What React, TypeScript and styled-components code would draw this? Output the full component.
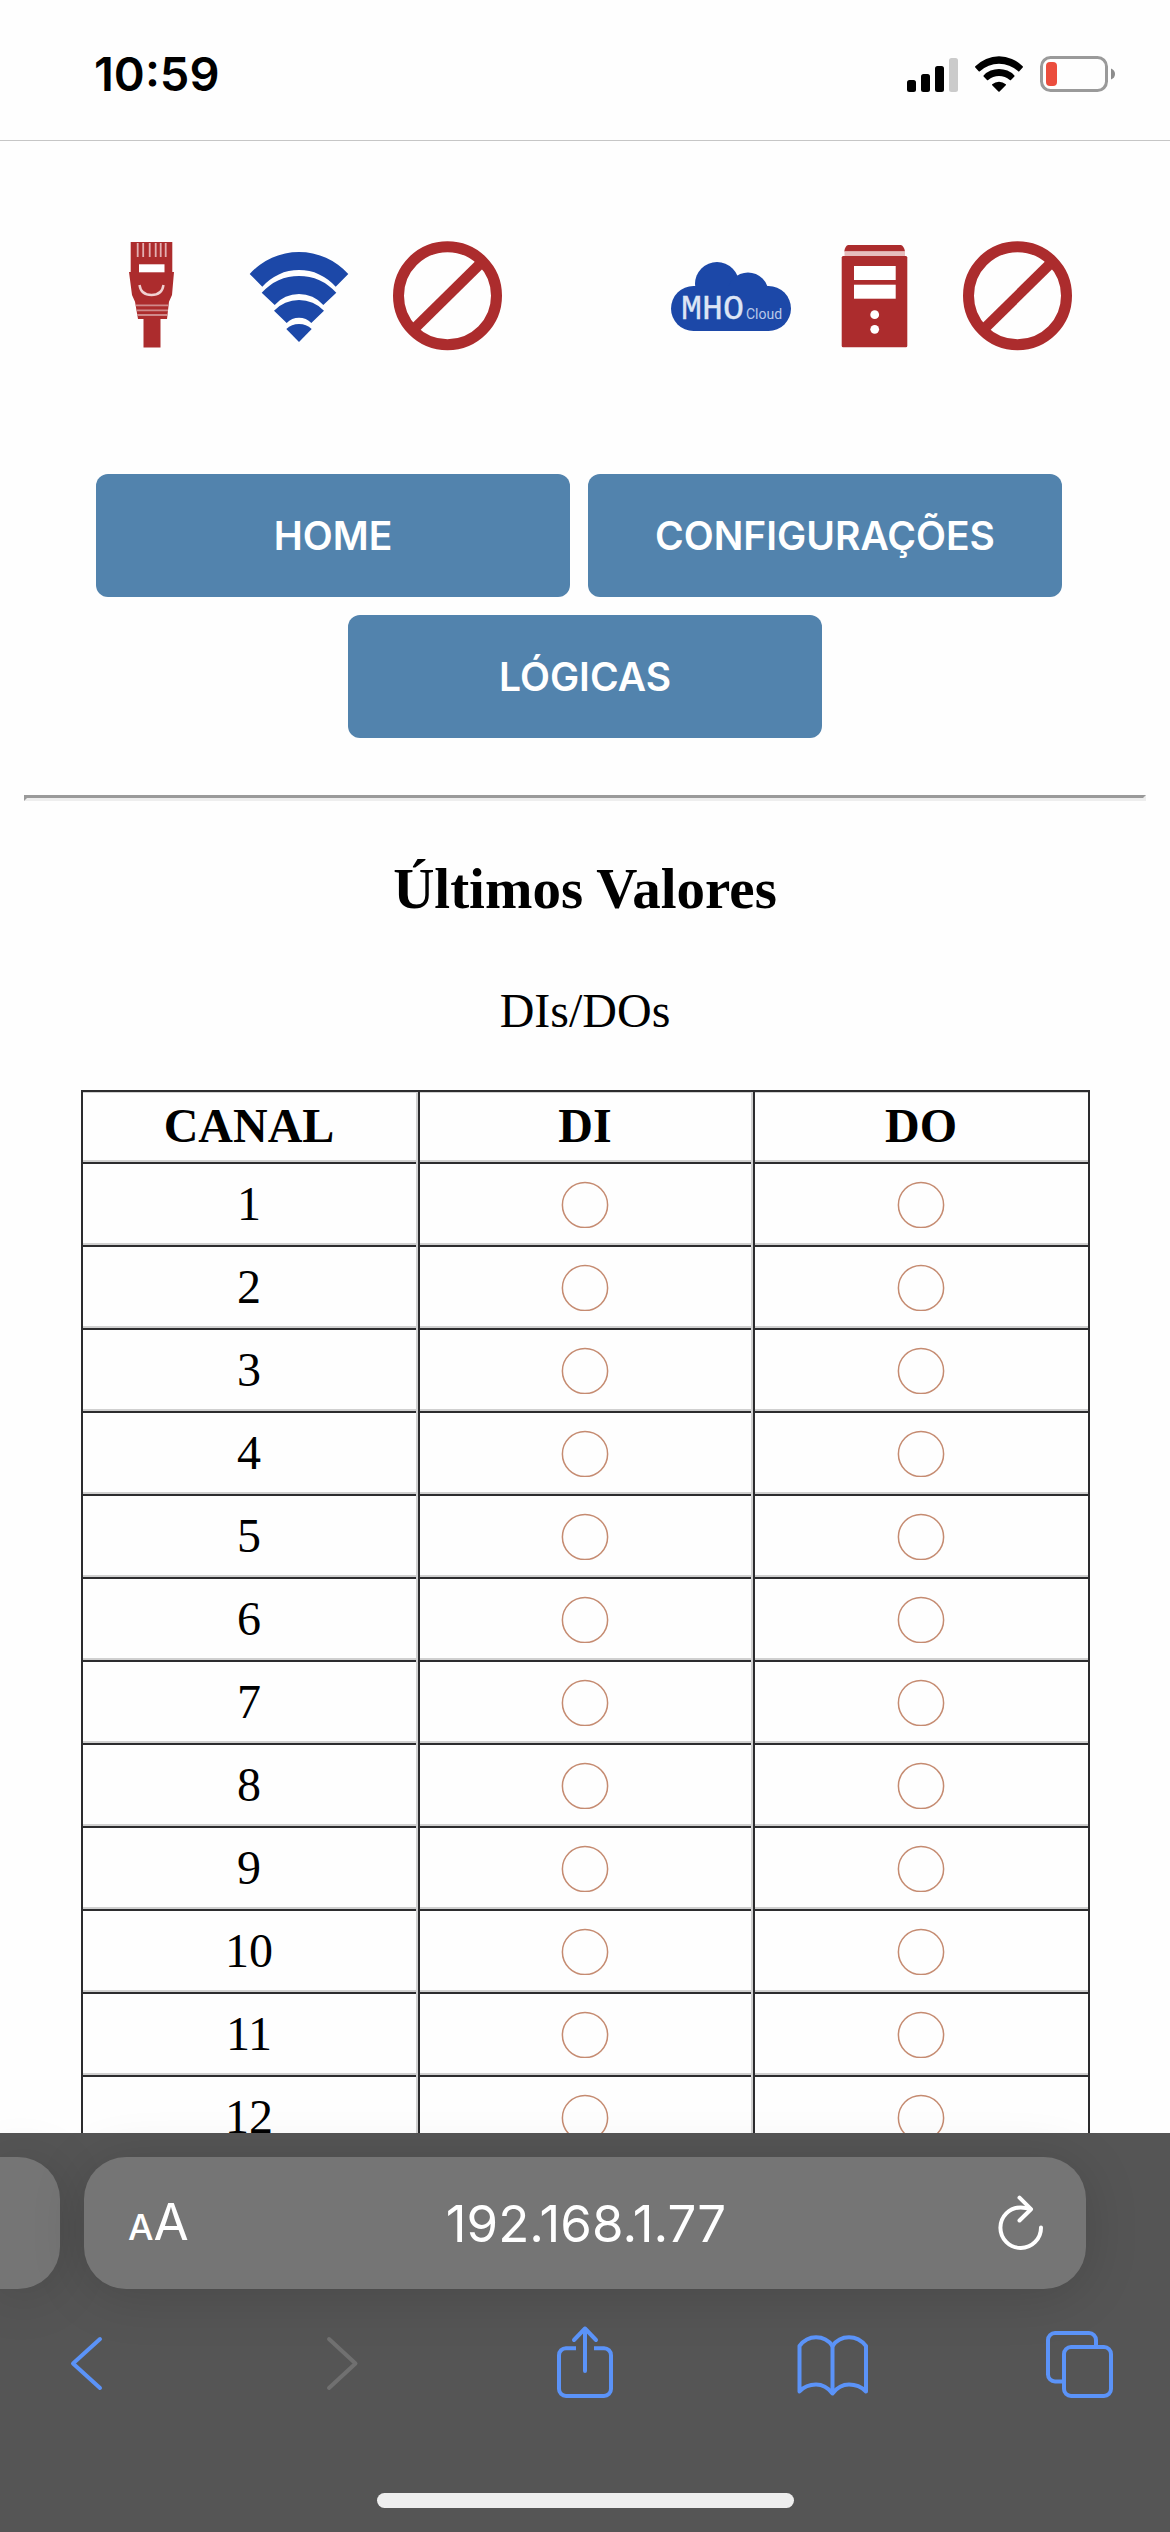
import React from "react";
import styled, { createGlobalStyle } from "styled-components";

const RED = "#ac2c2d";
const BLUE = "#1c48a8";
const LINK = "#5b93f8";
const DARK = "#2c2c2e";
const LIGHT = "#d0d0d0";
const UI_FONT = `Inter, "Liberation Sans", sans-serif`;

const GlobalStyle = createGlobalStyle`
  body {
    margin: 0;
    background: #fefefe;
    color: #000;
    font-family: "Liberation Serif", serif;
  }
`;

const Screen = styled.div`
  display: flex;
  flex-direction: column;
  height: 100vh;
  overflow: hidden;
`;

const StatusBar = styled.header`
  box-sizing: border-box;
  display: flex;
  flex: none;
  align-items: center;
  justify-content: space-between;
  height: 141px;
  padding: 8px 55px 0 94px;
  border-bottom: 1px solid #c6c6c6;
  font-family: ${UI_FONT};
`;

const Clock = styled.time`
  font-size: 47px;
  line-height: 56px;
  font-weight: 600;
`;

const StatusIcons = styled.div`
  display: flex;
  align-items: flex-end;
  gap: 17px;

  svg {
    display: block;
  }
`;

const Page = styled.main`
  flex: 1;
  min-height: 0;
  overflow: hidden;
  padding: 95px 24px 0;
`;

const Indicators = styled.section`
  display: flex;
  justify-content: space-between;
  padding: 0 69px 0 67px;
`;

const IndicatorGroup = styled.div<{ $gap: number }>`
  display: flex;
  gap: ${(p) => p.$gap}px;

  svg {
    display: block;
  }
`;

const Nav = styled.nav`
  display: flex;
  flex-direction: column;
  gap: 18px;
  margin-top: 118px;
`;

const NavRow = styled.div<{ $trailing?: number }>`
  display: flex;
  justify-content: center;
  gap: 18px;
  padding-right: ${(p) => p.$trailing ?? 0}px;
`;

const NavButton = styled.button`
  width: 474px;
  height: 123px;
  padding: 0;
  border: 0;
  border-radius: 12px;
  background: #5283ad;
  color: #fff;
  font-family: ${UI_FONT};
  font-size: 39px;
  font-weight: 600;
`;

const Divider = styled.hr`
  height: 0;
  margin: 57px 0 0;
  border: 3px solid;
  border-color: #9a9a9a #eee #eee #9a9a9a;
`;

const Title = styled.h3`
  margin: 56px 0 0;
  font-size: 57px;
  line-height: 64px;
  text-align: center;
`;

const Values = styled.table`
  width: calc(100% - 113px);
  margin: 0 auto;
  table-layout: fixed;
  border: 2px solid ${DARK};
  border-spacing: 0;
  font-size: 48px;
  line-height: 56px;
  text-align: center;

  caption {
    padding: 62px 0 51px;
  }

  th,
  td {
    box-sizing: border-box;
    padding: 0;
    border: 0 solid ${DARK};
    box-shadow: inset 0 2px 0 ${DARK}, inset 0 -2px 0 ${LIGHT};
  }

  td {
    height: 83px;
  }

  thead th {
    height: 70px;
    padding-bottom: 2px;
    box-shadow: inset 0 1px 0 ${LIGHT}, inset 0 -2px 0 ${LIGHT};
  }

  tbody th {
    font-weight: 400;
  }

  tr > * + * {
    border-left-width: 2px;
  }

  tr > :not(:last-child) {
    border-right: 2px solid ${LIGHT};
  }
`;

const LampIcon = styled.svg`
  display: block;
  width: 48px;
  height: 48px;
  margin: 0 auto;
  fill: none;
  stroke: #c58b71;
  stroke-width: 1.5;
`;

const BrowserBar = styled.footer`
  position: relative;
  flex: none;
  padding: 24px 0;
  background: #555;
  font-family: ${UI_FONT};
`;

const TabStrip = styled.div`
  display: flex;
  gap: 24px;
  padding-right: 84px;
`;

const PreviousTab = styled.div`
  flex: none;
  width: 60px;
  height: 132px;
  border-radius: 0 42px 42px 0;
  background: #757575;
  box-shadow: 0 6px 54px rgba(0, 0, 0, 0.15);
`;

const AddressField = styled.div`
  box-sizing: border-box;
  display: flex;
  flex: 1;
  align-items: center;
  min-width: 0;
  height: 132px;
  padding: 2px 42px 0 44px;
  border-radius: 42px;
  background: #757575;
  box-shadow: 0 6px 54px rgba(0, 0, 0, 0.15);
`;

const FieldButton = styled.button<{ $end?: boolean }>`
  display: flex;
  flex: none;
  align-items: baseline;
  justify-content: ${(p) => (p.$end ? "flex-end" : "flex-start")};
  width: 64px;
  padding: 0;
  border: 0;
  background: none;
  color: #fff;
  font-family: inherit;
  font-size: 51px;
  line-height: 60px;

  small {
    font-size: 36px;
    font-weight: 500;
  }
`;

const Address = styled.input`
  flex: 1;
  min-width: 0;
  padding: 0;
  border: 0;
  background: none;
  color: #fff;
  font-family: inherit;
  font-size: 51px;
  line-height: 60px;
  text-align: center;
`;

const Toolbar = styled.div`
  display: flex;
  justify-content: space-between;
  margin-top: 33px;
  padding: 0 50px 0 46px;
`;

const ToolButton = styled.button`
  width: 80px;
  height: 80px;
  padding: 0;
  border: 0;
  background: none;
  color: ${LINK};

  &:disabled {
    color: #707070;
  }

  svg {
    display: block;
  }
`;

const HomeIndicator = styled.div`
  width: 417px;
  height: 15px;
  margin: 91px auto 0;
  border-radius: 8px;
  background: #eee;
`;

const SignalIcon = () => (
  <svg width="51" height="34" viewBox="0 0 51 34" role="img" aria-label="Sinal">
    <rect x="0" y="22" width="9" height="12" rx="2.5" />
    <rect x="14" y="16" width="9" height="18" rx="2.5" />
    <rect x="28" y="8" width="9" height="26" rx="2.5" />
    <rect x="42" y="0" width="9" height="34" rx="2.5" fill="#cbcbcb" />
  </svg>
);

const StatusWifiIcon = () => (
  <svg width="48" height="36" viewBox="0 0 48 36" role="img" aria-label="Wi-Fi">
    <path d="M.3 10.3A33 33 0 0 1 47.7 10.3Q48.2 10.9 47.7 11.4L44.3 15.2Q43.7 15.7 43.1 15.2A28.5 28.5 0 0 0 4.9 15.2Q4.3 15.7 3.7 15.2L.3 11.4Q-.2 10.9 .3 10.3Z" />
    <path d="M8.6 19.4A21.5 21.5 0 0 1 39.4 19.4Q39.8 20 39.4 20.5L36 24.1Q35.4 24.6 34.8 24.1A16.6 16.6 0 0 0 13.2 24.1Q12.6 24.6 12 24.1L8.6 20.5Q8.2 20 8.6 19.4Z" />
    <path d="M17.2 28.2A10.5 10.5 0 0 1 30.8 28.2Q31.3 28.8 30.8 29.3L24.6 35.5Q24 36 23.4 35.5L17.2 29.3Q16.7 28.8 17.2 28.2Z" />
  </svg>
);

const BatteryIcon = () => (
  <svg width="75" height="36" viewBox="0 0 75 36" role="img" aria-label="Bateria fraca">
    <rect x="1.5" y="1.5" width="65" height="33" rx="9" fill="none" stroke="#9a9a9a" strokeWidth="3" />
    <rect x="6" y="6" width="11" height="24" rx="4" fill="#eb4d3d" />
    <path d="M71 12.5Q75 14 75 18Q75 22 71 23.5Z" fill="#8c8c8c" />
  </svg>
);

const EthernetIcon = () => (
  <svg width="120" height="120" viewBox="0 0 120 120" role="img" aria-label="Ethernet">
    <path fill={RED} d="M39.7 6H81.3V36H83L81 59L78 65.7L76 83H69.5V111.5H52.5V83H47L44 65.7L41 59L38 36H39.7Z" />
    <g stroke="#e3b0b1" strokeWidth="1.8">
      <path d="M46.7 7V21M52.2 7V21M58.7 7V21M64.7 7V21M69.7 7V21M74.7 7V21" />
      <path d="M45 69.3H77M46 74.3H77M46 79H76" stroke="#d08a8b" />
    </g>
    <rect x="48" y="28.3" width="25.5" height="8" fill="#fff" />
    <path d="M48.5 49Q50 59 60.5 59Q71 59 72.5 49" fill="none" stroke="#f0d2d2" strokeWidth="2.4" />
  </svg>
);

const WifiIcon = () => (
  <svg width="120" height="120" viewBox="0 0 120 120" fill={BLUE} role="img" aria-label="Wi-Fi">
    <path d="M10.7 38A66.2 66.2 0 0 1 109.3 38L96.7 50.7A48.7 48.7 0 0 0 23.3 50.7Z" />
    <path d="M22.7 56.7A50 50 0 0 1 97.3 56.7L84.3 69A32.3 32.3 0 0 0 35.7 69Z" />
    <path d="M35 74.7A34.6 34.6 0 0 1 85 74.7L72.3 87A17 17 0 0 0 47.7 87Z" />
    <path d="M47.3 93A18.6 18.6 0 0 1 72.7 93L60 106Z" />
  </svg>
);

const BlockedIcon = () => (
  <svg width="120" height="120" viewBox="0 0 120 120" fill="none" stroke={RED} role="img" aria-label="Desativado">
    <circle cx="60.5" cy="59.7" r="49" strokeWidth="11" />
    <path d="M94 27L27 93" strokeWidth="10.5" />
  </svg>
);

const CloudIcon = () => (
  <svg width="120" height="120" viewBox="0 0 120 120" fill={BLUE} role="img" aria-label="MHO Cloud">
    <circle cx="22.5" cy="72.5" r="22.5" />
    <circle cx="97.5" cy="72.5" r="22.5" />
    <circle cx="46" cy="48" r="22" />
    <circle cx="77" cy="57" r="20.5" />
    <rect x="22" y="50" width="76" height="45" />
    <text x="10" y="83" fill="#dde5f5" stroke="#dde5f5" strokeWidth="0.3" fontFamily="Liberation Mono, monospace" fontSize="35">
      MHO
    </text>
    <text x="75" y="83" fill="#b9c8e8" fontFamily="Roboto, sans-serif" fontSize="14">
      Cloud
    </text>
  </svg>
);

const ServerIcon = () => (
  <svg width="120" height="120" viewBox="0 0 120 120" fill={RED} role="img" aria-label="Servidor">
    <path d="M34 9H87Q90 10 91 15.5H30.3Q31 10 34 9Z" />
    <rect x="30.5" y="15.5" width="60.5" height="4.5" fill="#e6bcbc" />
    <rect x="27.7" y="20" width="65.6" height="91.3" rx="1.5" />
    <g fill="#fff">
      <rect x="40" y="30" width="41.7" height="14" />
      <rect x="40" y="48.7" width="41.7" height="14" />
      <circle cx="60.7" cy="78.7" r="4.4" />
      <circle cx="60.7" cy="93.3" r="4.4" />
    </g>
  </svg>
);

const Lamp = () => (
  <LampIcon viewBox="0 0 48 48" role="img" aria-label="Desligado">
    <circle cx="24" cy="25" r="22.6" />
  </LampIcon>
);

const ReloadIcon = () => (
  <svg width="46" height="58" viewBox="0 0 46 58" fill="none" stroke="currentColor" strokeWidth="4" strokeLinecap="round" strokeLinejoin="round">
    <path d="M43 32.5A20.3 20.3 0 1 1 22.7 12.4Q28 12.4 32.5 14.2" />
    <path d="M21.5 2.7L33 14.2L21.5 25.5" />
  </svg>
);

const ToolIcon = ({ children }: { children: React.ReactNode }) => (
  <svg width="80" height="80" viewBox="0 0 80 80" fill="none" stroke="currentColor" strokeWidth="4" strokeLinecap="round" strokeLinejoin="round" aria-hidden="true">
    {children}
  </svg>
);

const channels = Array.from({ length: 12 }, (_, i) => i + 1);

export default function App() {
  return (
    <Screen>
      <GlobalStyle />
      <StatusBar>
        <Clock>10:59</Clock>
        <StatusIcons>
          <SignalIcon />
          <StatusWifiIcon />
          <BatteryIcon />
        </StatusIcons>
      </StatusBar>

      <Page>
        <Indicators>
          <IndicatorGroup $gap={28}>
            <EthernetIcon />
            <WifiIcon />
            <BlockedIcon />
          </IndicatorGroup>
          <IndicatorGroup $gap={23}>
            <CloudIcon />
            <ServerIcon />
            <BlockedIcon />
          </IndicatorGroup>
        </Indicators>

        <Nav>
          <NavRow $trailing={12}>
            <NavButton type="button">HOME</NavButton>
            <NavButton type="button">CONFIGURAÇÕES</NavButton>
          </NavRow>
          <NavRow>
            <NavButton type="button">LÓGICAS</NavButton>
          </NavRow>
        </Nav>

        <Divider />
        <Title>Últimos Valores</Title>
        <Values>
          <caption>DIs/DOs</caption>
          <thead>
            <tr>
              <th scope="col">CANAL</th>
              <th scope="col">DI</th>
              <th scope="col">DO</th>
            </tr>
          </thead>
          <tbody>
            {channels.map((n) => (
              <tr key={n}>
                <th scope="row">{n}</th>
                <td>
                  <Lamp />
                </td>
                <td>
                  <Lamp />
                </td>
              </tr>
            ))}
          </tbody>
        </Values>
      </Page>

      <BrowserBar>
        <TabStrip>
          <PreviousTab />
          <AddressField>
            <FieldButton type="button">
              <small>A</small>A
            </FieldButton>
            <Address type="text" aria-label="Endereço" defaultValue="192.168.1.77" />
            <FieldButton type="button" $end aria-label="Recarregar">
              <ReloadIcon />
            </FieldButton>
          </AddressField>
        </TabStrip>
        <Toolbar>
          <ToolButton type="button" aria-label="Voltar">
            <ToolIcon>
              <path d="M54 17L27 41.5L54 66" />
            </ToolIcon>
          </ToolButton>
          <ToolButton type="button" aria-label="Avançar" disabled>
            <ToolIcon>
              <path d="M34 17L60.5 41.5L34 66" />
            </ToolIcon>
          </ToolButton>
          <ToolButton type="button" aria-label="Compartilhar">
            <ToolIcon>
              <path d="M33 26.2H23a7 7 0 0 0 -7 7V67a7 7 0 0 0 7 7H61a7 7 0 0 0 7 -7V33.2a7 7 0 0 0 -7 -7H51" strokeLinecap="butt" />
              <path d="M42 49V6.5M31 18L42 6.5L53 18" />
            </ToolIcon>
          </ToolButton>
          <ToolButton type="button" aria-label="Favoritos">
            <ToolIcon>
              <path d="M7.5 69.5V24Q14 15.3 24 15.3Q34.5 15.3 40.5 24Q46.5 15.3 57 15.3Q67 15.3 74 24V69.5Q67 62.6 57 62.6Q47.5 62.6 40.5 71.5Q33.5 62.6 24 62.6Q14 62.6 7.5 69.5Z" />
              <path d="M40.5 24V70" />
            </ToolIcon>
          </ToolButton>
          <ToolButton type="button" aria-label="Abas">
            <ToolIcon>
              <path d="M23 59.5H15a7 7 0 0 1 -7 -7V18a7 7 0 0 1 7 -7H49a7 7 0 0 1 7 7V24" strokeLinecap="butt" />
              <rect x="24" y="25" width="47" height="49" rx="7" />
            </ToolIcon>
          </ToolButton>
        </Toolbar>
        <HomeIndicator />
      </BrowserBar>
    </Screen>
  );
}
